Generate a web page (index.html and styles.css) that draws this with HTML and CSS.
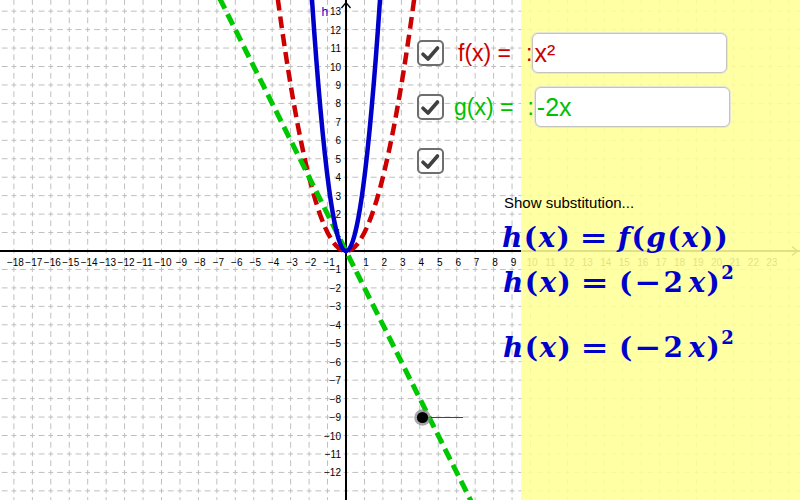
FILE: index.html
```html
<!DOCTYPE html>
<html>
<head>
<meta charset="utf-8">
<link rel="stylesheet" href="styles.css">
</head>
<body>
<div class="stage">
  <svg class="plot" width="800" height="500" viewBox="0 0 800 500">
    <defs>
      <pattern id="grid" patternUnits="userSpaceOnUse" x="336.775" y="241.775" width="18.45" height="18.45">
        <path d="M9.225 0V18.45M0 9.225H18.45" stroke="#bdbdbd" stroke-width="1" stroke-dasharray="5 4.225" stroke-dashoffset="2.5" fill="none" shape-rendering="crispEdges"/>
      </pattern>
    </defs>
    <rect width="800" height="500" fill="url(#grid)"/>
    <path d="M346 0V500M0 251H800" stroke="#000" stroke-width="2" fill="none"/>
    <path d="M341.5 8L346 2.5L350.5 8M792 246.5L797.5 251L792 255.5" stroke="#000" stroke-width="1.3" fill="none"/>
    <g class="ticks-x" font-family="Liberation Sans, Arial, sans-serif" font-size="10" text-anchor="middle" fill="#000">
      <text x="15.4" y="266">−18</text><text x="33.85" y="266">−17</text><text x="52.3" y="266">−16</text>
      <text x="70.75" y="266">−15</text><text x="89.2" y="266">−14</text><text x="107.65" y="266">−13</text>
      <text x="126.1" y="266">−12</text><text x="144.55" y="266">−11</text><text x="163" y="266">−10</text>
      <text x="181.45" y="266">−9</text><text x="199.9" y="266">−8</text><text x="218.35" y="266">−7</text>
      <text x="236.8" y="266">−6</text><text x="255.25" y="266">−5</text><text x="273.7" y="266">−4</text>
      <text x="292.15" y="266">−3</text><text x="310.6" y="266">−2</text><text x="329.05" y="266">−1</text>
      <text x="365.95" y="266">1</text><text x="384.4" y="266">2</text><text x="402.85" y="266">3</text>
      <text x="421.3" y="266">4</text><text x="439.75" y="266">5</text><text x="458.2" y="266">6</text>
      <text x="476.65" y="266">7</text><text x="495.1" y="266">8</text><text x="513.55" y="266">9</text>
      <text x="532" y="266">10</text><text x="550.45" y="266">11</text><text x="568.9" y="266">12</text>
      <text x="587.35" y="266">13</text><text x="605.8" y="266">14</text><text x="624.25" y="266">15</text>
      <text x="642.7" y="266">16</text><text x="661.15" y="266">17</text><text x="679.6" y="266">18</text>
      <text x="698.05" y="266">19</text><text x="716.5" y="266">20</text><text x="734.95" y="266">21</text>
      <text x="753.4" y="266">22</text><text x="771.85" y="266">23</text>
    </g>
    <g class="ticks-y" font-family="Liberation Sans, Arial, sans-serif" font-size="10" text-anchor="end" fill="#000">
      <text x="341" y="15.15">13</text><text x="341" y="33.6">12</text><text x="341" y="52.05">11</text>
      <text x="341" y="70.5">10</text><text x="341" y="88.95">9</text><text x="341" y="107.4">8</text>
      <text x="341" y="125.85">7</text><text x="341" y="144.3">6</text><text x="341" y="162.75">5</text>
      <text x="341" y="181.2">4</text><text x="341" y="199.65">3</text><text x="341" y="218.1">2</text>
      <text x="341" y="236.55">1</text>
      <text x="341" y="273.45">−1</text><text x="341" y="291.9">−2</text><text x="341" y="310.35">−3</text>
      <text x="341" y="328.8">−4</text><text x="341" y="347.25">−5</text><text x="341" y="365.7">−6</text>
      <text x="341" y="384.15">−7</text><text x="341" y="402.6">−8</text><text x="341" y="421.05">−9</text>
      <text x="341" y="439.5">−10</text><text x="341" y="457.95">−11</text><text x="341" y="476.4">−12</text>
    </g>
    <text x="321.5" y="15.5" font-family="Liberation Sans, Arial, sans-serif" font-size="12" fill="#0000cc">h</text>
    <path d="M277.73 -1.6Q346 503.6 414.27 -1.6" stroke="#cc0000" stroke-width="4.5" fill="none" stroke-dasharray="12 6"/>
    <line x1="219.5" y1="-2" x2="471.5" y2="502" stroke="#00c800" stroke-width="5" stroke-dasharray="12 6"/>
    <path d="M311.9 -1.6Q346 503.6 380.1 -1.6" stroke="#0000cc" stroke-width="4.5" fill="none"/>
    <line x1="428" y1="417.5" x2="463" y2="417.5" stroke="#444" stroke-width="1"/>
    <circle cx="422.5" cy="417.5" r="8.3" fill="#8a8a8a" fill-opacity="0.75"/>
    <circle cx="422.5" cy="417.5" r="5.6" fill="#000"/>
  </svg>

  <div class="layout">
    <div class="graph-space"></div>
    <div class="panel"></div>
  </div>

  <div class="controls">
    <div class="row">
      <span class="check"><svg width="27" height="26" viewBox="0 0 27 26"><rect x="1" y="1" width="25" height="24" rx="4" fill="#fff" fill-opacity="0.6" stroke="#6e6e6e" stroke-width="2"/><path d="M6 14.2L11 19L20.5 8" stroke="#404040" stroke-width="3.6" fill="none" stroke-linecap="round" stroke-linejoin="round"/></svg></span>
      <span class="caption red cap-f">f(x) =</span>
      <span class="colon red colon-f">:</span>
      <span class="field field-f red">x²</span>
    </div>
    <div class="row">
      <span class="check"><svg width="27" height="26" viewBox="0 0 27 26"><rect x="1" y="1" width="25" height="24" rx="4" fill="#fff" fill-opacity="0.6" stroke="#6e6e6e" stroke-width="2"/><path d="M6 14.2L11 19L20.5 8" stroke="#404040" stroke-width="3.6" fill="none" stroke-linecap="round" stroke-linejoin="round"/></svg></span>
      <span class="caption green cap-g">g(x) =</span>
      <span class="colon green colon-g">:</span>
      <span class="field field-g green">-2x</span>
    </div>
    <div class="row">
      <span class="check"><svg width="27" height="26" viewBox="0 0 27 26"><rect x="1" y="1" width="25" height="24" rx="4" fill="#fff" fill-opacity="0.6" stroke="#6e6e6e" stroke-width="2"/><path d="M6 14.2L11 19L20.5 8" stroke="#404040" stroke-width="3.6" fill="none" stroke-linecap="round" stroke-linejoin="round"/></svg></span>
    </div>
  </div>

  <div class="formulas">
    <div class="note">Show substitution...</div>
    <div class="fx f1"><i>h</i>(<i>x</i>)<span class="eq">=</span><i>f</i>(<i>g</i>(<i>x</i>))</div>
    <div class="fx f2"><i>h</i>(<i>x</i>)<span class="eq">=</span>(<span class="minus">−</span>2<span class="thin"></span><i>x</i>)<span class="sup">2</span></div>
    <div class="fx f3"><i>h</i>(<i>x</i>)<span class="eq">=</span>(<span class="minus">−</span>2<span class="thin"></span><i>x</i>)<span class="sup">2</span></div>
  </div>
</div>
</body>
</html>
```

FILE: styles.css
```css
html, body {
  margin: 0;
  padding: 0;
  background: #ffffff;
}

.stage {
  position: relative;
  width: 800px;
  height: 500px;
  overflow: hidden;
  font-family: "Liberation Sans", Arial, sans-serif;
}

.plot {
  position: absolute;
  left: 0;
  top: 0;
  display: block;
}

.layout {
  position: relative;
  display: flex;
  height: 500px;
}

.graph-space {
  flex: 0 0 521px;
}

.panel {
  flex: 1;
  background: rgba(255, 255, 150, 0.88);
}

.controls {
  position: absolute;
  left: 417px;
  top: 33px;
  display: flex;
  flex-direction: column;
  gap: 14px;
}

.row {
  display: flex;
  align-items: center;
  height: 40px;
}

.check {
  display: block;
  width: 27px;
  height: 26px;
}

.check svg {
  display: block;
}

.caption,
.colon {
  font-size: 23px;
  line-height: 26px;
}

.red { color: #cc0000; }
.green { color: #00c000; }

.cap-f { margin-left: 14px; }
.cap-g { margin-left: 10px; }

.colon-f { margin-left: 15px; }
.colon-g { margin-left: 14px; }

.field {
  box-sizing: border-box;
  width: 195px;
  height: 40px;
  background: #ffffff;
  border: 1px solid #c4c4bc;
  box-shadow: 0 0 0 1px #e6e6d6;
  border-radius: 6px;
  font-size: 25px;
  line-height: 38px;
  padding-left: 1px;
}

.field-f { margin-left: 0px; }
.field-g { margin-left: 1px; }

.formulas {
  position: absolute;
  left: 502px;
  top: 194px;
  color: #0000cc;
}

.note {
  font-size: 15px;
  line-height: 18px;
  height: 18px;
  color: #000;
  margin-left: 2px;
  margin-bottom: 3px;
}

.fx {
  font-family: "DejaVu Serif", "Liberation Serif", serif;
  font-weight: bold;
  font-size: 28px;
  line-height: 46px;
  height: 45px;
  white-space: nowrap;
  letter-spacing: 1.4px;
}

.fx i {
  font-style: italic;
}

.f2 {
  margin-left: 1px;
  margin-bottom: 20px;
}

.f3 {
  margin-left: 1px;
}

.eq {
  display: inline-block;
  transform: scaleX(1.2);
  margin: 0 11px 0 11px;
}

.minus {
  display: inline-block;
  transform: scaleX(1.15);
  margin: 0 3px 0 2px;
}

.thin {
  display: inline-block;
  width: 4px;
}

.sup {
  font-size: 18px;
  line-height: 0;
  vertical-align: 13px;
  margin-left: 0;
}
```
